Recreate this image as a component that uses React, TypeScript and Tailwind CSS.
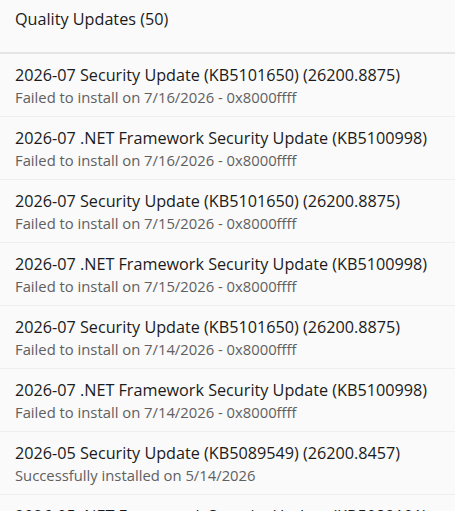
import React from 'react';

type Update = { title: string; status: string };

const updates: Update[] = [
  { title: '2026-07 Security Update (KB5101650) (26200.8875)', status: 'Failed to install on 7/16/2026 - 0x8000ffff' },
  { title: '2026-07 .NET Framework Security Update (KB5100998)', status: 'Failed to install on 7/16/2026 - 0x8000ffff' },
  { title: '2026-07 Security Update (KB5101650) (26200.8875)', status: 'Failed to install on 7/15/2026 - 0x8000ffff' },
  { title: '2026-07 .NET Framework Security Update (KB5100998)', status: 'Failed to install on 7/15/2026 - 0x8000ffff' },
  { title: '2026-07 Security Update (KB5101650) (26200.8875)', status: 'Failed to install on 7/14/2026 - 0x8000ffff' },
  { title: '2026-07 .NET Framework Security Update (KB5100998)', status: 'Failed to install on 7/14/2026 - 0x8000ffff' },
  { title: '2026-05 Security Update (KB5089549) (26200.8457)', status: 'Successfully installed on 5/14/2026' },
  { title: '2026-05 .NET Framework Security Update (KB5089101)', status: 'Successfully installed on 5/14/2026' },
];

const App: React.FC = () => {
  return (
    <div className="h-[511px] overflow-hidden bg-[#fafafa] font-['Open_Sans',sans-serif]">
      <div className="h-[54px] border-b-2 border-[#e5e5e5] px-[15px] pt-[7px]">
        <h2 className="text-[16.2px] leading-[24px] text-[#1b1b1b]">Quality Updates (50)</h2>
      </div>
      <ul>
        {updates.map((u, i) => (
          <li key={i} className="h-[63px] border-b border-[#efefef] px-[15px] pt-[10px]">
            <p className="text-[16.2px] leading-[23px] text-[#1b1b1b]">{u.title}</p>
            <p className="text-[14.8px] leading-[21px] text-[#606060]">{u.status}</p>
          </li>
        ))}
      </ul>
    </div>
  );
};

export default App;
